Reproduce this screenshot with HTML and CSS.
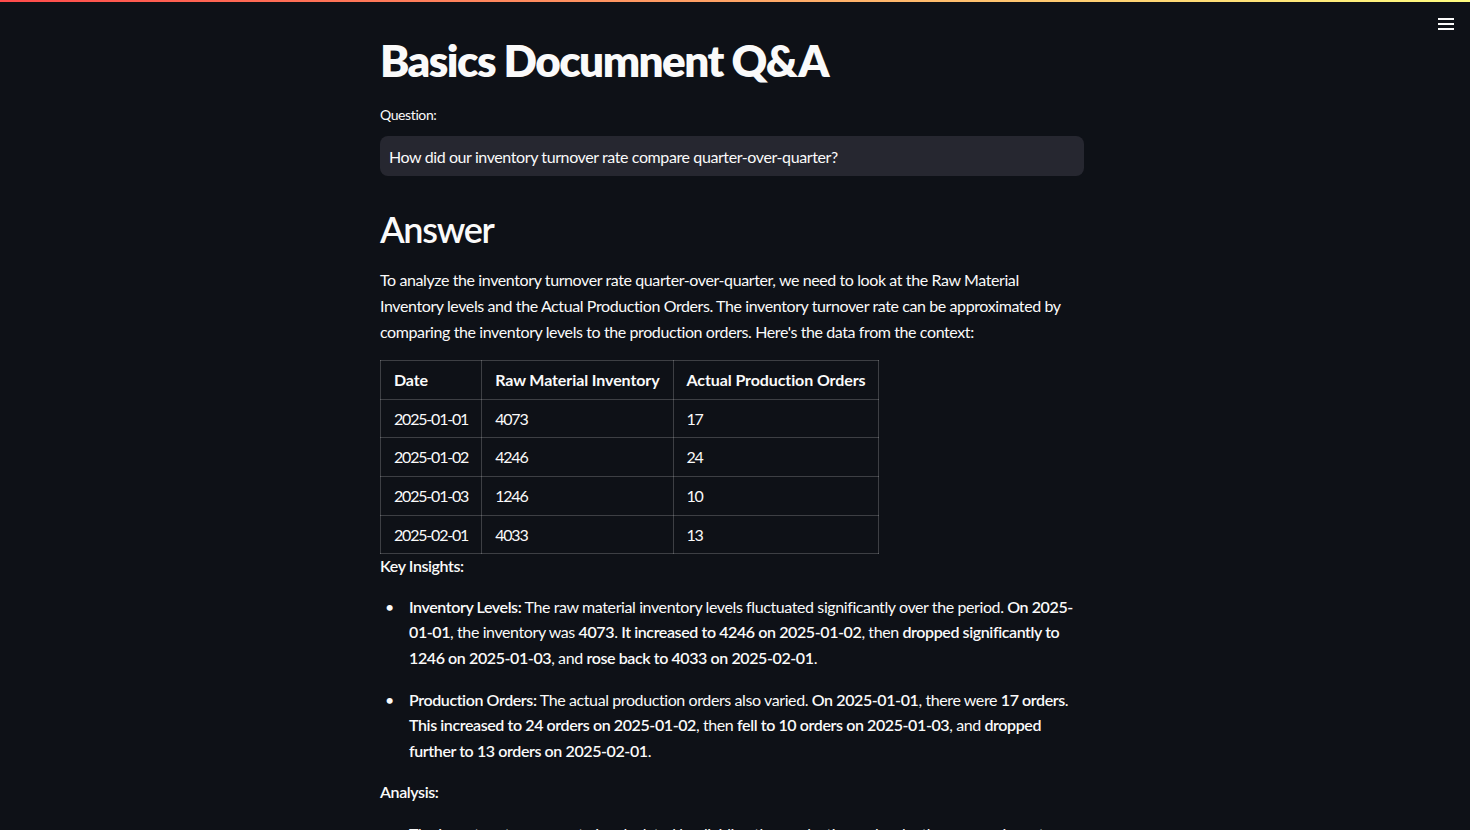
FILE: index.html
```html
<!DOCTYPE html>
<html lang="en">
<head>
<meta charset="utf-8">
<title>Basics Documnent Q&amp;A</title>
<link rel="stylesheet" href="styles.css">
</head>
<body>
<div class="decoration"></div>
<header class="app-header">
  <button class="menu-btn" aria-label="Main menu">
    <svg width="16" height="12" viewBox="0 0 16 12"><rect x="0" y="0" width="16" height="2" fill="#fafafa"/><rect x="0" y="5" width="16" height="2" fill="#fafafa"/><rect x="0" y="10" width="16" height="2" fill="#fafafa"/></svg>
  </button>
</header>
<div class="app-view">
  <main class="block">
    <h1 class="title">Basics Documnent Q&amp;A</h1>
    <label class="field-label" for="q">Question:</label>
    <div class="input-wrap"><input id="q" class="text-input" type="text" value="How did our inventory turnover rate compare quarter-over-quarter?"></div>
    <h2 class="heading">Answer</h2>
    <div class="markdown">
      <p>To analyze the inventory turnover rate quarter-over-quarter, we need to look at the Raw Material Inventory levels and the Actual Production Orders. The inventory turnover rate can be approximated by comparing the inventory levels to the production orders. Here's the data from the context:</p>
      <table class="data-table">
        <thead><tr><th>Date</th><th>Raw Material Inventory</th><th>Actual Production Orders</th></tr></thead>
        <tbody>
          <tr><td>2025-01-01</td><td>4073</td><td>17</td></tr>
          <tr><td>2025-01-02</td><td>4246</td><td>24</td></tr>
          <tr><td>2025-01-03</td><td>1246</td><td>10</td></tr>
          <tr><td>2025-02-01</td><td>4033</td><td>13</td></tr>
        </tbody>
      </table>
      <p class="tight"><strong>Key Insights:</strong></p>
      <ul>
        <li><strong>Inventory Levels:</strong> The raw material inventory levels fluctuated significantly over the period. <strong>On 2025-01-01</strong>, the inventory was <strong>4073</strong>. <strong>It increased to 4246 on 2025-01-02</strong>, then <strong>dropped significantly to 1246 on 2025-01-03</strong>, and <strong>rose back to 4033 on 2025-02-01</strong>.</li>
        <li><strong>Production Orders:</strong> The actual production orders also varied. <strong>On 2025-01-01</strong>, there were <strong>17 orders</strong>. <strong>This increased to 24 orders on 2025-01-02</strong>, then <strong>fell to 10 orders on 2025-01-03</strong>, and <strong>dropped further to 13 orders on 2025-02-01</strong>.</li>
      </ul>
      <p><strong>Analysis:</strong></p>
      <ul>
        <li>The inventory turnover rate is calculated by dividing the production orders by the average inventory level for each period.</li>
      </ul>
    </div>
  </main>
</div>
</body>
</html>
```
FILE: styles.css
```css
html, body {
  margin: 0;
  padding: 0;
  height: 100%;
  overflow: hidden;
}
body {
  background: #0e1117;
  color: #fafafa;
  font-family: "Source Sans Pro", Lato, "Noto Sans", sans-serif;
  font-size: 16px;
  line-height: 1.6;
  letter-spacing: -0.4px;
}
.decoration {
  position: fixed;
  top: 0;
  left: 0;
  right: 0;
  height: 2px;
  background: linear-gradient(90deg, rgb(255, 75, 75), rgb(255, 253, 128));
  z-index: 3;
}
.app-header {
  position: fixed;
  top: 0;
  right: 0;
  height: 46px;
  display: flex;
  align-items: center;
  padding-right: 16px;
  z-index: 2;
}
.menu-btn {
  background: transparent;
  border: none;
  padding: 0;
  margin-top: 2px;
  display: flex;
  align-items: center;
  justify-content: center;
  width: 16px;
  height: 16px;
}
.app-view {
  padding-right: 6px;
}
.block {
  max-width: 736px;
  box-sizing: border-box;
  padding: 34px 16px 0;
  margin: 0 auto;
}
.title {
  margin: 0;
  font-size: 44px;
  line-height: 1.2;
  font-weight: 800;
  padding: 0 0 17px;
  letter-spacing: -1.55px;
}
.field-label {
  display: block;
  font-size: 14px;
  line-height: 1.6;
  margin-bottom: 10px;
}
.input-wrap {
  background: #262730;
  border-radius: 8px;
  height: 40px;
  display: flex;
  align-items: center;
}
.text-input {
  width: 100%;
  background: transparent;
  border: none;
  outline: none;
  color: #fafafa;
  font-family: inherit;
  font-size: 16px;
  letter-spacing: -0.4px;
  padding: 0 9px;
}
.heading {
  margin: 0;
  font-size: 36px;
  font-weight: 600;
  line-height: 1.2;
  padding: 32px 0 16px;
  letter-spacing: -1.3px;
}
.markdown p {
  margin: 0 0 16px;
}
.markdown p.tight {
  margin-top: -1px;
  margin-bottom: 15px;
}
.data-table {
  border-collapse: collapse;
  margin: 0;
}
.data-table th,
.data-table td {
  border: 1px solid rgba(250, 250, 250, 0.2);
  padding: 6px 13px;
  text-align: left;
  vertical-align: middle;
}
.data-table th {
  font-weight: 700;
  letter-spacing: -0.1px;
}
.data-table td {
  letter-spacing: -1.2px;
}
.markdown ul {
  margin: 0 0 16px;
  padding-left: 29px;
}
.markdown li {
  margin: 0 0 16px;
}
.markdown li::marker {
  content: "\2022\2003\2005";
  font-size: 16px;
}
.markdown strong {
  font-weight: 600;
}
.markdown ul + p {
  margin-top: 1px;
}
```
